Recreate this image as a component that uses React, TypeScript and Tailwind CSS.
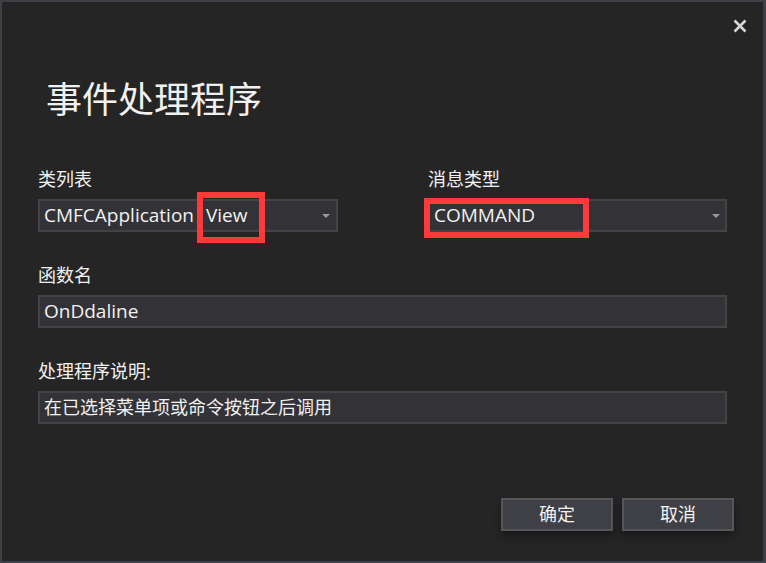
const font = { fontFamily: '"Open Sans", "Noto Sans CJK SC", sans-serif' };

function Caret() {
  return (
    <svg width="8" height="4" viewBox="0 0 8 4" className="shrink-0">
      <path d="M0 0 L8 0 L4 4 Z" fill="#999999" />
    </svg>
  );
}

function Label({ children }: { children: React.ReactNode }) {
  return <div className="text-[18px] leading-[24px] text-[#f1f1f1]">{children}</div>;
}

function Field({ children }: { children: React.ReactNode }) {
  return (
    <div className="h-[33px] border-2 border-[#434346] bg-[#333337] pl-[4px] flex items-center text-[18px] text-[#f1f1f1] whitespace-nowrap">
      {children}
    </div>
  );
}

export default function App() {
  return (
    <div
      className="w-[766px] h-[563px] box-border border-[#3f3f46] border-t-2 border-l-2 border-b-2 border-r-[3px] bg-[#252526] flex flex-col"
      style={font}
    >
      {/* title bar */}
      <div className="h-[48px] flex items-center justify-end pr-[16px]">
        <button className="w-[14px] h-[14px] flex items-center justify-center">
          <svg width="14" height="14" viewBox="0 0 14 14">
            <path d="M1.5 1.5 L12.5 12.5 M12.5 1.5 L1.5 12.5" stroke="#d6d6d6" strokeWidth="2.6" />
          </svg>
        </button>
      </div>

      <div className="px-[36px]">
        <h1 className="mt-[26px] ml-[8px] text-[36px] leading-[48px] text-[#f1f1f1]">事件处理程序</h1>

        <div className="mt-[43px] grid grid-cols-[300px_1fr] gap-x-[90px]">
          <div>
            <Label>类列表</Label>
            <div className="relative mt-2">
              <Field>
                <span className="text-[19px]">CMFCApplication</span>
                <span className="ml-[12px] text-[19px]">View</span>
                <span className="flex-1" />
                <span className="mr-[6px] flex">
                  <Caret />
                </span>
              </Field>
              <div className="absolute left-[159px] -top-[7px] w-[68px] h-[51px] border-[6px] border-[#fb3a3a]" />
            </div>
          </div>
          <div>
            <Label>消息类型</Label>
            <div className="relative mt-2">
              <Field>
                <span className="text-[19px]">COMMAND</span>
                <span className="flex-1" />
                <span className="mr-[5px] flex">
                  <Caret />
                </span>
              </Field>
              <div className="absolute -left-[4px] -top-[1px] w-[165px] h-[40px] border-[6px] border-[#fb3a3a]" />
            </div>
          </div>
        </div>

        <div className="mt-[31px]">
          <Label>函数名</Label>
          <div className="mt-2">
            <Field>
              <span className="text-[19px]">OnDdaline</span>
            </Field>
          </div>
        </div>

        <div className="mt-[31px]">
          <Label>处理程序说明:</Label>
          <div className="mt-2">
            <Field>在已选择菜单项或命令按钮之后调用</Field>
          </div>
        </div>
      </div>

      <div className="mt-[74px] pr-[29px] flex justify-end gap-[9px]">
        {['确定', '取消'].map((t) => (
          <button
            key={t}
            className="w-[112px] h-[33px] border-2 border-[#55555a] bg-[#3f3f46] text-[18px] text-[#f1f1f1] flex items-center justify-center shadow-[0_5px_8px_rgba(0,0,0,0.35)]"
          >
            {t}
          </button>
        ))}
      </div>
    </div>
  );
}
